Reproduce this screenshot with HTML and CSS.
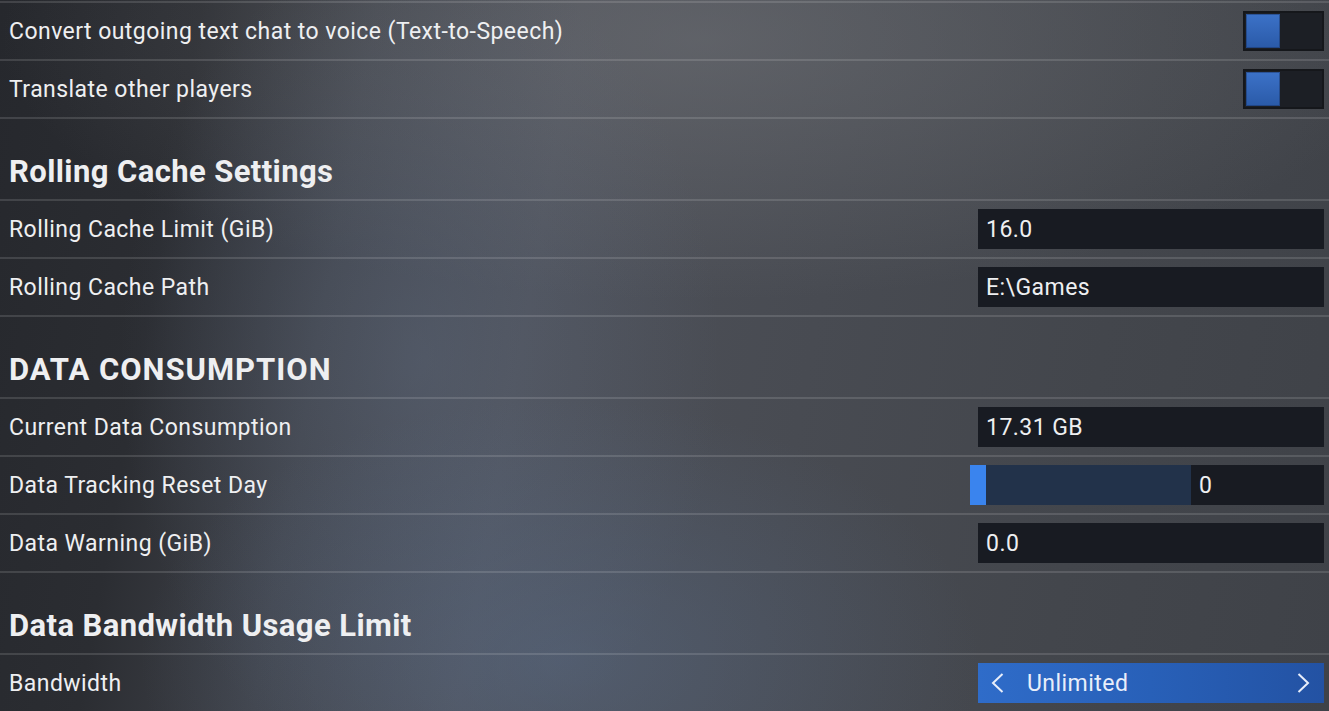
FILE: index.html
```html
<!DOCTYPE html>
<html>
<head>
<meta charset="utf-8">
<link rel="stylesheet" href="styles.css">
</head>
<body>
<div class="page">
  <div class="list">
    <div class="row">
      <span class="label">Convert outgoing text chat to voice (Text-to-Speech)</span>
      <div class="toggle"><div class="knob"></div></div>
    </div>
    <div class="row">
      <span class="label">Translate other players</span>
      <div class="toggle"><div class="knob"></div></div>
    </div>
    <div class="section"><h2>Rolling Cache Settings</h2></div>
    <div class="row">
      <span class="label">Rolling Cache Limit (GiB)</span>
      <div class="field">16.0</div>
    </div>
    <div class="row">
      <span class="label">Rolling Cache Path</span>
      <div class="field">E:\Games</div>
    </div>
    <div class="section"><h2 class="caps">DATA CONSUMPTION</h2></div>
    <div class="row">
      <span class="label">Current Data Consumption</span>
      <div class="field">17.31 GB</div>
    </div>
    <div class="row">
      <span class="label">Data Tracking Reset Day</span>
      <div class="slider">
        <div class="track"><div class="thumb"></div></div>
        <div class="slider-value">0</div>
      </div>
    </div>
    <div class="row">
      <span class="label">Data Warning (GiB)</span>
      <div class="field">0.0</div>
    </div>
    <div class="section"><h2>Data Bandwidth Usage Limit</h2></div>
    <div class="row">
      <span class="label">Bandwidth</span>
      <div class="selector">
        <svg class="chev" width="13" height="22" viewBox="0 0 13 22"><path d="M11.5 2 L2 11 L11.5 20" fill="none" stroke="#e8eefa" stroke-width="2"/></svg>
        <span class="sel-text">Unlimited</span>
        <svg class="chev right" width="13" height="22" viewBox="0 0 13 22"><path d="M1.5 2 L11 11 L1.5 20" fill="none" stroke="#e8eefa" stroke-width="2"/></svg>
      </div>
    </div>
  </div>
</div>
</body>
</html>
```

FILE: styles.css
```css
html, body {
  margin: 0;
  padding: 0;
  height: 100%;
  overflow: hidden;
}
body {
  font-family: Roboto, "Noto Sans", sans-serif;
  color: #eeeff1;
  background-color: #3a3d43;
  background-image:
    radial-gradient(ellipse 420px 260px at 560px 660px, rgba(90,110,140,0.45), rgba(90,110,140,0) 100%),
    radial-gradient(ellipse 300px 420px at 420px 360px, rgba(100,115,140,0.35), rgba(100,115,140,0) 100%),
    radial-gradient(ellipse 700px 260px at 700px 40px, rgba(120,122,126,0.45), rgba(120,122,126,0) 100%),
    linear-gradient(100deg, #26282d 0%, #2b2d32 14%, #40434a 26%, #4d5058 40%, #484b52 60%, #43464c 80%, #3f4248 100%);
}
.page {
  padding-top: 1px;
}
.list {
  border-top: 2px solid rgba(255,255,255,0.13);
}
.row {
  height: 56px;
  border-bottom: 2px solid rgba(255,255,255,0.13);
  display: flex;
  align-items: center;
  justify-content: space-between;
  padding: 0 5px 0 9px;
}
.label {
  font-size: 23px;
  letter-spacing: 0.45px;
}
.section {
  height: 80px;
  border-bottom: 2px solid rgba(255,255,255,0.13);
  display: flex;
  align-items: flex-end;
  padding-left: 9px;
}
.section h2 {
  margin: 0 0 10px 0;
  font-size: 31px;
  font-weight: 700;
  line-height: 34px;
  letter-spacing: 0.4px;
}
.section h2.caps {
  letter-spacing: 1px;
}
.toggle {
  width: 76px;
  height: 36px;
  background: #1c1f25;
  border: 2px solid #15171b;
  display: flex;
  align-items: center;
  padding-left: 1px;
}
.knob {
  width: 34px;
  height: 34px;
  background: linear-gradient(180deg, #3c72c8 0%, #2a5aa8 100%);
  box-shadow: inset 0 0 0 1px rgba(20,40,80,0.4);
}
.field {
  width: 338px;
  height: 40px;
  background: #181b22;
  display: flex;
  align-items: center;
  padding-left: 8px;
  font-size: 23px;
  letter-spacing: 0.45px;
}
.slider {
  width: 354px;
  height: 40px;
  display: flex;
}
.track {
  width: 221px;
  height: 40px;
  background: #22324a;
}
.thumb {
  width: 16px;
  height: 40px;
  background: #3a84ee;
}
.slider-value {
  flex: 1;
  background: #181b22;
  display: flex;
  align-items: center;
  padding-left: 8px;
  font-size: 23px;
}
.selector {
  width: 346px;
  height: 40px;
  background: linear-gradient(90deg, #2f6cc9 0%, #2860b8 50%, #2352a3 100%);
  display: flex;
  align-items: center;
  font-size: 23px;
  letter-spacing: 0.45px;
  color: #e8eefa;
}
.chev {
  margin-left: 13px;
}
.sel-text {
  margin-left: 23px;
  flex: 1;
}
.chev.right {
  margin-left: 0;
  margin-right: 14px;
}
```
